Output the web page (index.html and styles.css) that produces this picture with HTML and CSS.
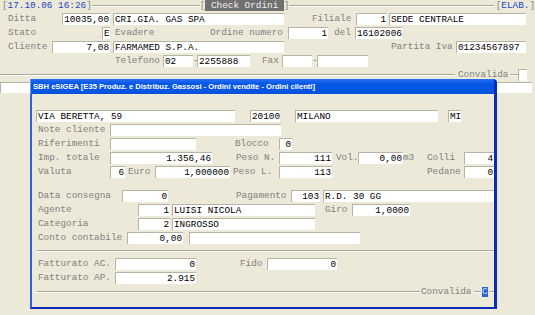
FILE: index.html
```html
<!DOCTYPE html>
<html lang="it">
<head>
  <meta charset="UTF-8" />
  <title>Check Ordini</title>
  <link rel="stylesheet" href="styles.css">
</head>
<body>
  <!-- barra superiore -->
  <div class="topbar">
    <span class="br">[</span><span class="blue">17.10.06 16:26</span><span class="br">]</span>
    <span class="rule w-108"></span>
    <span class="br">[</span><span class="tag"> Check Ordini </span><span class="br">]</span>
    <span class="rule grow"></span>
    <span class="br">[</span><span class="blue">ELAB.</span><span class="br">]</span>
  </div>

  <div class="form">
    <div class="row">
      <span class="lbl w-54">Ditta</span>
      <span class="fld num w-48">10035,00</span>
      <span class="fld w-171 ml-3">CRI.GIA. GAS SPA</span>
      <span class="lbl w-44 ml-28">Filiale</span>
      <span class="fld num w-31">1</span>
      <span class="fld w-137 ml-2">SEDE CENTRALE</span>
    </div>
    <div class="row">
      <span class="lbl w-94">Stato</span>
      <span class="fld w-8">E</span>
      <span class="lbl w-95 ml-5">Evadere</span>
      <span class="lbl w-78">Ordine numero</span>
      <span class="fld num w-40">1</span>
      <span class="lbl w-21 ml-6">del</span>
      <span class="fld w-47">16102006</span>
    </div>
    <div class="row">
      <span class="lbl w-44">Cliente</span>
      <span class="fld num w-58">7,08</span>
      <span class="fld w-171 ml-3">FARMAMED S.P.A.</span>
      <span class="lbl w-65 ml-107">Partita Iva</span>
      <span class="fld w-70">01234567897</span>
    </div>
    <div class="row">
      <span class="lbl w-48 ml-107">Telefono</span>
      <span class="fld w-30">02</span>
      <span class="lbl dash w-4">-</span>
      <span class="fld w-53">2255888</span>
      <span class="lbl w-20 ml-12">Fax</span>
      <span class="fld w-30"></span>
      <span class="lbl dash w-5">-</span>
      <span class="fld w-51"></span>
    </div>
    <div class="row">
      <span class="line w-455 ml--8"></span>
      <span class="lbl w-50 ml-3">Convalida</span>
      <span class="line w-8 ml-2"></span>
      <span class="fld w-9"></span>
    </div>
    <div class="fld wide"></div>
  </div>

  <!-- finestra clienti -->
  <div class="dialog">
    <div class="titlebar">SBH eSIGEA [E35 Produz. e Distribuz. Gassosi - Ordini vendite - Ordini clienti]</div>
    <div class="dlg-body">
      <div class="row">
        <span class="fld w-199 ml--2">VIA BERETTA, 59</span>
        <span class="fld w-30 ml-15">20100</span>
        <span class="fld w-143 ml-15">MILANO</span>
        <span class="fld w-13 ml-10">MI</span>
      </div>
      <div class="row">
        <span class="lbl w-72">Note cliente</span>
        <span class="fld w-171"></span>
      </div>
      <div class="row">
        <span class="lbl w-72">Riferimenti</span>
        <span class="fld w-86"></span>
        <span class="lbl w-44 ml-39">Blocco</span>
        <span class="fld num w-13">0</span>
      </div>
      <div class="row">
        <span class="lbl w-72">Imp. totale</span>
        <span class="fld num w-102">1.356,46</span>
        <span class="lbl w-43 ml-24">Peso N.</span>
        <span class="fld num w-53">111</span>
        <span class="lbl w-22 ml-4">Vol.</span>
        <span class="fld num w-45">0,00</span>
        <span class="lbl w-24">m3</span>
        <span class="lbl w-37">Colli</span>
        <span class="fld num w-30">4</span>
      </div>
      <div class="row">
        <span class="lbl w-72">Valuta</span>
        <span class="fld num w-15">6</span>
        <span class="lbl w-27 ml-3">Euro</span>
        <span class="fld num w-75">1,000000</span>
        <span class="lbl w-46 ml-3">Peso L.</span>
        <span class="fld num w-53">113</span>
        <span class="lbl w-37 ml-95">Pedane</span>
        <span class="fld num w-30">0</span>
      </div>

      <div class="row group">
        <span class="lbl w-84">Data consegna</span>
        <span class="fld num w-46">0</span>
        <span class="lbl w-55 ml-68">Pagamento</span>
        <span class="fld num w-29">103</span>
        <span class="fld w-171 ml-3">R.D. 30 GG</span>
      </div>
      <div class="row">
        <span class="lbl w-100">Agente</span>
        <span class="fld num w-32">1</span>
        <span class="fld w-143 ml-2">LUISI NICOLA</span>
        <span class="lbl w-27 ml-10">Giro</span>
        <span class="fld num w-58">1,0000</span>
      </div>
      <div class="row">
        <span class="lbl w-100">Categoria</span>
        <span class="fld num w-32">2</span>
        <span class="fld w-143 ml-2">INGROSSO</span>
      </div>
      <div class="row">
        <span class="lbl w-89">Conto contabile</span>
        <span class="fld num w-56">0,00</span>
        <span class="fld w-171 ml-6"></span>
      </div>

      <div class="sep"></div>

      <div class="row">
        <span class="lbl w-77">Fatturato AC.</span>
        <span class="fld num w-81">0</span>
        <span class="lbl w-27 ml-44">Fido</span>
        <span class="fld num w-70">0</span>
      </div>
      <div class="row">
        <span class="lbl w-77">Fatturato AP.</span>
        <span class="fld num w-81">2.915</span>
      </div>
      <div class="row">
        <span class="line w-383 ml--1"></span>
        <span class="lbl w-50 ml-1">Convalida</span>
        <span class="line w-7 ml-3"></span>
        <span class="cursor ml-1">C</span>
        <span class="line w-5 ml-1"></span>
      </div>
    </div>
  </div>
</body>
</html>
```

FILE: styles.css
```css
body {
  margin: 0;
  width: 535px;
  height: 315px;
  overflow: hidden;
  position: relative;
  background: #ece9d8;
  color: #808080;
  font-family: "Liberation Mono", "Courier New", monospace;
  font-size: 9.35px;
}

.topbar {
  display: flex;
  align-items: center;
  height: 11px;
  line-height: 11px;
  padding-left: 2px;
}

.topbar span {
  flex: none;
  white-space: pre;
}

.br {
  color: #8a8a8a;
}

.blue {
  color: #2046c8;
}

.tag {
  background: #707070;
  color: #f0f0f0;
}

.rule {
  height: 0;
  border-top: 1px solid #aca899;
  border-bottom: 1px solid #fff;
}

.topbar .grow {
  flex: 1;
  margin-right: 2px;
}

.form {
  padding-top: 1px;
  padding-left: 8px;
}

.row {
  display: flex;
  align-items: center;
  height: 14px;
}

.lbl {
  flex: none;
  line-height: 12px;
  white-space: pre;
  overflow: hidden;
}

.lbl.dash {
  overflow: visible;
}

.fld {
  flex: none;
  box-sizing: border-box;
  height: 12px;
  line-height: 11px;
  padding: 0 1px;
  background: #fff;
  color: #000;
  border-top: 1px solid #b7b4a6;
  border-left: 1px solid #b7b4a6;
  white-space: pre;
  overflow: hidden;
}

.num {
  text-align: right;
}

.line {
  flex: none;
  height: 0;
  border-top: 1px solid #aca899;
  border-bottom: 1px solid #fff;
}

.wide {
  height: 11px;
  margin-left: -8px;
  width: 532px;
}

/* finestra */
.dialog {
  position: absolute;
  left: 30px;
  top: 79px;
  width: 467px;
  height: 230px;
  box-sizing: border-box;
  background: #ece9d8;
  border-left: 2px solid #2f5ee0;
  border-right: 3px solid #0a2bb9;
  border-bottom: 2px solid #0a2bb9;
  border-top-right-radius: 4px;
}

.titlebar {
  height: 15px;
  line-height: 15px;
  padding-left: 2px;
  margin-left: -2px;
  background: linear-gradient(#2a6ef0, #0858e6 30%, #0453e0);
  color: #fff;
  font-family: "Liberation Sans", Arial, sans-serif;
  font-weight: bold;
  font-size: 7.6px;
  white-space: pre;
  overflow: hidden;
  border-left: 1px solid #6b9cf5;
}

.dlg-body {
  padding: 15px 0 0 6px;
}

.group {
  margin-top: 10px;
}

.sep {
  margin: 5px 0 5px -1px;
  width: 457px;
  border-top: 1px solid #aca899;
  border-bottom: 1px solid #fff;
}

.cursor {
  flex: none;
  width: 6px;
  height: 10px;
  line-height: 10px;
  background: #2d62d8;
  color: #c4d8ff;
  overflow: hidden;
}

.w-4 { width: 4px; }
.w-5 { width: 5px; }
.w-7 { width: 7px; }
.w-8 { width: 8px; }
.w-9 { width: 9px; }
.w-13 { width: 13px; }
.w-15 { width: 15px; }
.w-20 { width: 20px; }
.w-21 { width: 21px; }
.w-22 { width: 22px; }
.w-24 { width: 24px; }
.w-27 { width: 27px; }
.w-29 { width: 29px; }
.w-30 { width: 30px; }
.w-31 { width: 31px; }
.w-32 { width: 32px; }
.w-37 { width: 37px; }
.w-40 { width: 40px; }
.w-43 { width: 43px; }
.w-44 { width: 44px; }
.w-45 { width: 45px; }
.w-46 { width: 46px; }
.w-47 { width: 47px; }
.w-48 { width: 48px; }
.w-50 { width: 50px; }
.w-51 { width: 51px; }
.w-53 { width: 53px; }
.w-54 { width: 54px; }
.w-55 { width: 55px; }
.w-56 { width: 56px; }
.w-58 { width: 58px; }
.w-65 { width: 65px; }
.w-70 { width: 70px; }
.w-72 { width: 72px; }
.w-75 { width: 75px; }
.w-77 { width: 77px; }
.w-78 { width: 78px; }
.w-81 { width: 81px; }
.w-84 { width: 84px; }
.w-86 { width: 86px; }
.w-89 { width: 89px; }
.w-94 { width: 94px; }
.w-95 { width: 95px; }
.w-100 { width: 100px; }
.w-102 { width: 102px; }
.w-108 { width: 108px; }
.w-137 { width: 137px; }
.w-143 { width: 143px; }
.w-171 { width: 171px; }
.w-199 { width: 199px; }
.w-383 { width: 383px; }
.w-455 { width: 455px; }

.ml--8 { margin-left: -8px; }
.ml--2 { margin-left: -2px; }
.ml--1 { margin-left: -1px; }
.ml-1 { margin-left: 1px; }
.ml-2 { margin-left: 2px; }
.ml-3 { margin-left: 3px; }
.ml-4 { margin-left: 4px; }
.ml-5 { margin-left: 5px; }
.ml-6 { margin-left: 6px; }
.ml-10 { margin-left: 10px; }
.ml-12 { margin-left: 12px; }
.ml-15 { margin-left: 15px; }
.ml-24 { margin-left: 24px; }
.ml-28 { margin-left: 28px; }
.ml-39 { margin-left: 39px; }
.ml-44 { margin-left: 44px; }
.ml-68 { margin-left: 68px; }
.ml-95 { margin-left: 95px; }
.ml-107 { margin-left: 107px; }
```
